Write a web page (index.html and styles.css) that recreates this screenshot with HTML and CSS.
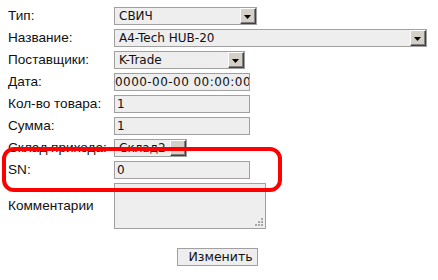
FILE: index.html
```html
<!DOCTYPE html>
<html lang="ru">
<head>
<meta charset="utf-8">
<title>Изменить товар</title>
<link rel="stylesheet" href="styles.css">
</head>
<body>
<form class="form">
  <div class="label">Тип:</div>
  <div class="sel w-type"><span class="sel-text">СВИЧ</span><span class="arrow"><svg width="7" height="4" viewBox="0 0 7 4"><polygon points="0,0 7,0 3.5,4" fill="#000"/></svg></span></div>

  <div class="label">Название:</div>
  <div class="sel w-name"><span class="sel-text">A4-Tech HUB-20</span><span class="arrow"><svg width="7" height="4" viewBox="0 0 7 4"><polygon points="0,0 7,0 3.5,4" fill="#000"/></svg></span></div>

  <div class="label">Поставщики:</div>
  <div class="sel w-supp"><span class="sel-text">K-Trade</span><span class="arrow"><svg width="7" height="4" viewBox="0 0 7 4"><polygon points="0,0 7,0 3.5,4" fill="#000"/></svg></span></div>

  <div class="label">Дата:</div>
  <div class="inp date">0000-00-00 00:00:00</div>

  <div class="label">Кол-во товара:</div>
  <div class="inp">1</div>

  <div class="label">Сумма:</div>
  <div class="inp">1</div>

  <div class="label">Склад прихода:</div>
  <div class="sel w-store"><span class="sel-text">Склад2</span><span class="arrow"><svg width="7" height="4" viewBox="0 0 7 4"><polygon points="0,0 7,0 3.5,4" fill="#000"/></svg></span></div>

  <div class="label">SN:</div>
  <div class="inp">0</div>

  <div class="label">Комментарии</div>
  <div class="area"><svg class="grip" width="8" height="8" viewBox="0 0 8 8"><g fill="#a8a8a8"><rect x="6" y="0" width="2" height="2"/><rect x="3" y="3" width="2" height="2"/><rect x="6" y="3" width="2" height="2"/><rect x="0" y="6" width="2" height="2"/><rect x="3" y="6" width="2" height="2"/><rect x="6" y="6" width="2" height="2"/></g></svg></div>

  <div class="actions"><div class="btn">Изменить</div></div>
</form>
<div class="highlight"></div>
</body>
</html>
```

FILE: styles.css
```css
html, body {
  margin: 0;
  padding: 0;
  background: #ffffff;
}

body {
  position: relative;
  width: 438px;
  height: 280px;
  overflow: hidden;
  font-family: "Liberation Sans", Arial, sans-serif;
  font-size: 13px;
  color: #000;
}

.form {
  display: grid;
  grid-template-columns: 106px 1fr;
  row-gap: 4px;
  align-items: center;
  width: 419px;
  margin: 7px 0 0 8px;
}

.label {
  font-size: 13.6px;
  line-height: 18px;
  white-space: nowrap;
  color: #111;
}

.sel,
.inp,
.area,
.btn {
  box-sizing: border-box;
  background: #eeeeee;
  border: 1px solid #a0a0a0;
  font-family: "DejaVu Sans", Verdana, sans-serif;
  font-size: 12px;
  color: #111;
}

.sel {
  display: flex;
  align-items: stretch;
  height: 18px;
}

.sel-text {
  flex: 1;
  padding-left: 4px;
  line-height: 16px;
  white-space: nowrap;
  overflow: hidden;
}

.arrow {
  box-sizing: border-box;
  width: 16px;
  height: 16px;
  display: flex;
  align-items: center;
  justify-content: center;
  background: #d4d0c8;
  border-top: 1px solid #ffffff;
  border-left: 1px solid #ffffff;
  border-right: 1px solid #404040;
  border-bottom: 1px solid #404040;
  box-shadow: inset -1px -1px 0 #808080;
}

.arrow svg {
  display: block;
  margin: 1px 1px 0 0;
}

.w-type { width: 143px; }
.w-name { width: 313px; }
.w-supp { width: 131px; }
.w-store { width: 73px; }

.inp {
  width: 136px;
  height: 18px;
  padding-left: 2px;
  line-height: 16px;
  white-space: nowrap;
  overflow: hidden;
}

.inp.date {
  padding-left: 0;
  letter-spacing: 0.45px;
}

.area {
  position: relative;
  width: 152px;
  height: 46px;
}

.grip {
  position: absolute;
  right: 2px;
  bottom: 2px;
}

.actions {
  grid-column: 1 / 3;
  display: flex;
  justify-content: center;
  margin-top: 15px;
}

.btn {
  width: 81px;
  height: 18px;
  line-height: 16px;
  padding-left: 6px;
  text-align: center;
  font-size: 12.5px;
  white-space: nowrap;
}

.highlight {
  position: absolute;
  left: 2px;
  top: 147px;
  width: 280px;
  height: 45px;
  box-sizing: border-box;
  border: 4px solid #ff0000;
  border-radius: 12px;
  pointer-events: none;
}
```
